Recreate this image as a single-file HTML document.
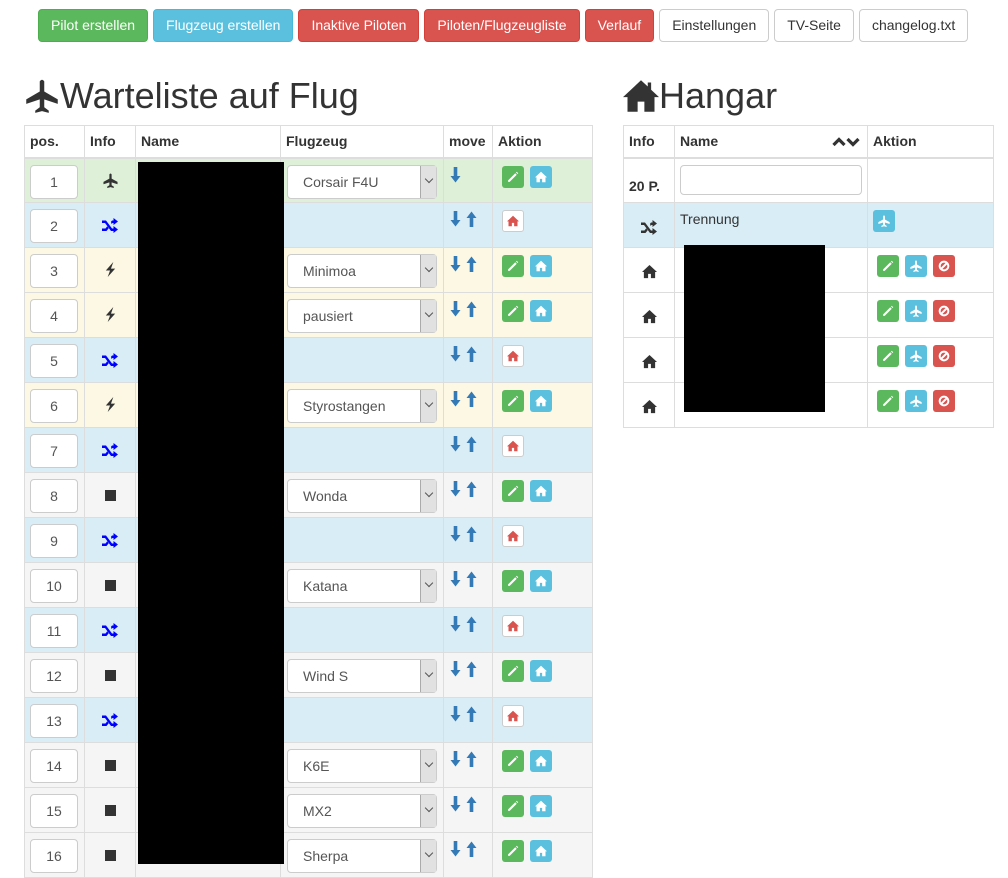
<!DOCTYPE html>
<html><head><meta charset="utf-8"><style>
body{margin:0;background:#fff;font-family:"Liberation Sans",Arial,sans-serif;font-size:14px;color:#333;width:1008px;height:876px;overflow:hidden;position:relative}
.nav{position:absolute;top:9px;left:38px;display:flex;gap:5px}
.b{height:33px;line-height:31px;padding:0 12px;border-radius:4px;color:#fff;font-size:14px;box-sizing:border-box;border:1px solid}
.g{background:#5cb85c;border-color:#4cae4c}.c{background:#5bc0de;border-color:#46b8da}.r{background:#d9534f;border-color:#d43f3a}.w{background:#fff;border-color:#ccc;color:#333}
h1{position:absolute;margin:0;font-weight:normal;font-size:36px;line-height:40px;top:76px;display:flex;align-items:center}
table{position:absolute;border-collapse:collapse;table-layout:fixed}
td,th{border:1px solid #ddd;padding:0;vertical-align:top;box-sizing:border-box}
th{text-align:left;font-weight:bold;height:32px;padding-left:5px;border-bottom:2px solid #ddd;vertical-align:middle}
#L{left:24px;top:125px;width:568px}
#L td{height:45px}
.inp{margin:6px 0 0 5px;width:48px;height:34px;border:1px solid #ccc;border-radius:4px;box-sizing:border-box;line-height:32px;text-align:center;background:#fff;font-size:14px;color:#555}
.sel{margin:6px 0 0 6px;width:150px;height:34px;border:1px solid #ccc;border-radius:4px;box-sizing:border-box;background:#fff;position:relative;color:#555;line-height:32px;padding-left:15px}
.sel:after{content:"";position:absolute;right:0;top:0;width:15px;height:32px;background:#e1e1e1;border-left:1px solid #aaa}
.sel i{position:absolute;right:4px;top:10px;width:5px;height:5px;border-right:1px solid #555;border-bottom:1px solid #555;transform:rotate(45deg);z-index:1}
.ic{text-align:center;padding-top:14px}
.mv{padding:8px 0 0 6px}
.mv svg{margin-right:5px}
.ak{padding:7px 0 0 9px}
.sb{display:inline-block;width:22px;height:22px;border-radius:3px;box-sizing:border-box;vertical-align:top;margin-right:6px;text-align:center}
.sb svg{margin-top:5px}
.sg{background:#5cb85c}.sc{background:#5bc0de}.sr{background:#d9534f}.sw{background:#fff;border:1px solid #ccc}
.gr{background:#dff0d8}.bl{background:#d9edf7}.ye{background:#fcf8e3}.gy{background:#f5f5f5}
#R{left:623px;top:125px;width:370px}
#R td{height:45px}
</style></head><body>
<div class="nav">
<div class="b g">Pilot erstellen</div><div class="b c">Flugzeug erstellen</div><div class="b r">Inaktive Piloten</div><div class="b r">Piloten/Flugzeugliste</div><div class="b r">Verlauf</div><div class="b w">Einstellungen</div><div class="b w">TV-Seite</div><div class="b w">changelog.txt</div>
</div>
<h1 style="left:24px"><svg width="36" height="36" viewBox="0 0 16 16"><path fill="#333" d="M7 1.5Q8 0 9 1.5V6L15 9.5V11.5L9 9.5V13L11 14.5V15.5L8 14.7L5 15.5V14.5L7 13V9.5L1 11.5V9.5L7 6Z"/></svg>Warteliste auf Flug</h1>
<h1 style="left:623px"><svg width="36" height="36" viewBox="0 0 16 16"><path fill="#333" d="M8 1L0 8.5H2V15H6.5V10.5H9.5V15H14V8.5H16L12.5 5.2V2H11V3.8Z"/></svg>Hangar</h1>

<svg width="0" height="0" style="position:absolute"><defs>
<symbol id="pl" viewBox="0 0 16 16"><path d="M6.8 1.5Q8 -0.5 9.2 1.5V6L15.5 9.5V12L9.2 10V13L11.5 14.5V16L8 15L4.5 16V14.5L6.8 13V10L0.5 12V9.5L6.8 6Z"/></symbol>
<symbol id="hm" viewBox="0 0 16 16"><path d="M8 1L0 8.5H2V15H6.5V10.5H9.5V15H14V8.5H16Z"/></symbol>
<symbol id="pe" viewBox="0 0 16 16"><path d="M1.5 12.5L11 3L13 5L3.5 14.5H1.5Z M12 2L13 1L15 3L14 4Z"/></symbol>
<symbol id="sh" viewBox="0 0 16 16"><path d="M0 3.5H4L10 11.5H11.5V9L16 12.5L11.5 16V14H9L3 6H0Z M0 11.5H3.5L5.2 9.3L6.7 11.2L4.5 14H0Z M9 4.8L10 3.5H11.5V1L16 4.5L11.5 8V6H10.5L9.5 7Z"/></symbol>
<symbol id="bo" viewBox="0 0 16 16"><path d="M11 0L3 9H7.5L5 16L13 7H8.5Z"/></symbol>
<symbol id="dn" viewBox="0 0 10 16"><path d="M3.2 0H6.8V9H10L5 15.5L0 9H3.2Z"/></symbol>
<symbol id="up" viewBox="0 0 10 16"><path d="M3.2 16H6.8V7H10L5 0.5L0 7H3.2Z"/></symbol>
<symbol id="ba" viewBox="0 0 16 16"><circle cx="8" cy="8" r="5.8" fill="none" stroke="#fff" stroke-width="2.6"/><path d="M4 12L12 4" stroke="#fff" stroke-width="2.6"/></symbol>
</defs></svg>

<table id="L">
<colgroup><col style="width:60px"><col style="width:51px"><col style="width:145px"><col style="width:163px"><col style="width:49px"><col style="width:100px"></colgroup>
<tr><th>pos.</th><th>Info</th><th>Name</th><th>Flugzeug</th><th>move</th><th>Aktion</th></tr>
<tr class="gr"><td><div class="inp">1</div></td><td class="ic"><svg width="15" height="15" fill="#333"><use href="#pl"/></svg></td><td></td><td><div class="sel">Corsair F4U<i></i></div></td><td class="mv"><svg width="11" height="16" fill="#337ab7"><use href="#dn"/></svg></td><td class="ak"><span class="sb sg"><svg width="12" height="12" fill="#fff"><use href="#pe"/></svg></span><span class="sb sc"><svg width="12" height="12" fill="#fff"><use href="#hm"/></svg></span></td></tr>
<tr class="bl"><td><div class="inp">2</div></td><td class="ic"><svg width="16" height="16" fill="#00f"><use href="#sh"/></svg></td><td></td><td></td><td class="mv"><svg width="11" height="16" fill="#337ab7"><use href="#dn"/></svg><svg width="11" height="16" fill="#337ab7"><use href="#up"/></svg></td><td class="ak"><span class="sb sw"><svg width="12" height="12" fill="#d9534f" style="margin-top:4px"><use href="#hm"/></svg></span></td></tr>
<tr class="ye"><td><div class="inp">3</div></td><td class="ic"><svg width="15" height="15" fill="#333"><use href="#bo"/></svg></td><td></td><td><div class="sel">Minimoa<i></i></div></td><td class="mv"><svg width="11" height="16" fill="#337ab7"><use href="#dn"/></svg><svg width="11" height="16" fill="#337ab7"><use href="#up"/></svg></td><td class="ak"><span class="sb sg"><svg width="12" height="12" fill="#fff"><use href="#pe"/></svg></span><span class="sb sc"><svg width="12" height="12" fill="#fff"><use href="#hm"/></svg></span></td></tr>
<tr class="ye"><td><div class="inp">4</div></td><td class="ic"><svg width="15" height="15" fill="#333"><use href="#bo"/></svg></td><td></td><td><div class="sel">pausiert<i></i></div></td><td class="mv"><svg width="11" height="16" fill="#337ab7"><use href="#dn"/></svg><svg width="11" height="16" fill="#337ab7"><use href="#up"/></svg></td><td class="ak"><span class="sb sg"><svg width="12" height="12" fill="#fff"><use href="#pe"/></svg></span><span class="sb sc"><svg width="12" height="12" fill="#fff"><use href="#hm"/></svg></span></td></tr>
<tr class="bl"><td><div class="inp">5</div></td><td class="ic"><svg width="16" height="16" fill="#00f"><use href="#sh"/></svg></td><td></td><td></td><td class="mv"><svg width="11" height="16" fill="#337ab7"><use href="#dn"/></svg><svg width="11" height="16" fill="#337ab7"><use href="#up"/></svg></td><td class="ak"><span class="sb sw"><svg width="12" height="12" fill="#d9534f" style="margin-top:4px"><use href="#hm"/></svg></span></td></tr>
<tr class="ye"><td><div class="inp">6</div></td><td class="ic"><svg width="15" height="15" fill="#333"><use href="#bo"/></svg></td><td></td><td><div class="sel">Styrostangen<i></i></div></td><td class="mv"><svg width="11" height="16" fill="#337ab7"><use href="#dn"/></svg><svg width="11" height="16" fill="#337ab7"><use href="#up"/></svg></td><td class="ak"><span class="sb sg"><svg width="12" height="12" fill="#fff"><use href="#pe"/></svg></span><span class="sb sc"><svg width="12" height="12" fill="#fff"><use href="#hm"/></svg></span></td></tr>
<tr class="bl"><td><div class="inp">7</div></td><td class="ic"><svg width="16" height="16" fill="#00f"><use href="#sh"/></svg></td><td></td><td></td><td class="mv"><svg width="11" height="16" fill="#337ab7"><use href="#dn"/></svg><svg width="11" height="16" fill="#337ab7"><use href="#up"/></svg></td><td class="ak"><span class="sb sw"><svg width="12" height="12" fill="#d9534f" style="margin-top:4px"><use href="#hm"/></svg></span></td></tr>
<tr class="gy"><td><div class="inp">8</div></td><td class="ic"><svg width="14" height="14"><rect x="2" y="3" width="11" height="11" fill="#333"/></svg></td><td></td><td><div class="sel">Wonda<i></i></div></td><td class="mv"><svg width="11" height="16" fill="#337ab7"><use href="#dn"/></svg><svg width="11" height="16" fill="#337ab7"><use href="#up"/></svg></td><td class="ak"><span class="sb sg"><svg width="12" height="12" fill="#fff"><use href="#pe"/></svg></span><span class="sb sc"><svg width="12" height="12" fill="#fff"><use href="#hm"/></svg></span></td></tr>
<tr class="bl"><td><div class="inp">9</div></td><td class="ic"><svg width="16" height="16" fill="#00f"><use href="#sh"/></svg></td><td></td><td></td><td class="mv"><svg width="11" height="16" fill="#337ab7"><use href="#dn"/></svg><svg width="11" height="16" fill="#337ab7"><use href="#up"/></svg></td><td class="ak"><span class="sb sw"><svg width="12" height="12" fill="#d9534f" style="margin-top:4px"><use href="#hm"/></svg></span></td></tr>
<tr class="gy"><td><div class="inp">10</div></td><td class="ic"><svg width="14" height="14"><rect x="2" y="3" width="11" height="11" fill="#333"/></svg></td><td></td><td><div class="sel">Katana<i></i></div></td><td class="mv"><svg width="11" height="16" fill="#337ab7"><use href="#dn"/></svg><svg width="11" height="16" fill="#337ab7"><use href="#up"/></svg></td><td class="ak"><span class="sb sg"><svg width="12" height="12" fill="#fff"><use href="#pe"/></svg></span><span class="sb sc"><svg width="12" height="12" fill="#fff"><use href="#hm"/></svg></span></td></tr>
<tr class="bl"><td><div class="inp">11</div></td><td class="ic"><svg width="16" height="16" fill="#00f"><use href="#sh"/></svg></td><td></td><td></td><td class="mv"><svg width="11" height="16" fill="#337ab7"><use href="#dn"/></svg><svg width="11" height="16" fill="#337ab7"><use href="#up"/></svg></td><td class="ak"><span class="sb sw"><svg width="12" height="12" fill="#d9534f" style="margin-top:4px"><use href="#hm"/></svg></span></td></tr>
<tr class="gy"><td><div class="inp">12</div></td><td class="ic"><svg width="14" height="14"><rect x="2" y="3" width="11" height="11" fill="#333"/></svg></td><td></td><td><div class="sel">Wind S<i></i></div></td><td class="mv"><svg width="11" height="16" fill="#337ab7"><use href="#dn"/></svg><svg width="11" height="16" fill="#337ab7"><use href="#up"/></svg></td><td class="ak"><span class="sb sg"><svg width="12" height="12" fill="#fff"><use href="#pe"/></svg></span><span class="sb sc"><svg width="12" height="12" fill="#fff"><use href="#hm"/></svg></span></td></tr>
<tr class="bl"><td><div class="inp">13</div></td><td class="ic"><svg width="16" height="16" fill="#00f"><use href="#sh"/></svg></td><td></td><td></td><td class="mv"><svg width="11" height="16" fill="#337ab7"><use href="#dn"/></svg><svg width="11" height="16" fill="#337ab7"><use href="#up"/></svg></td><td class="ak"><span class="sb sw"><svg width="12" height="12" fill="#d9534f" style="margin-top:4px"><use href="#hm"/></svg></span></td></tr>
<tr class="gy"><td><div class="inp">14</div></td><td class="ic"><svg width="14" height="14"><rect x="2" y="3" width="11" height="11" fill="#333"/></svg></td><td></td><td><div class="sel">K6E<i></i></div></td><td class="mv"><svg width="11" height="16" fill="#337ab7"><use href="#dn"/></svg><svg width="11" height="16" fill="#337ab7"><use href="#up"/></svg></td><td class="ak"><span class="sb sg"><svg width="12" height="12" fill="#fff"><use href="#pe"/></svg></span><span class="sb sc"><svg width="12" height="12" fill="#fff"><use href="#hm"/></svg></span></td></tr>
<tr class="gy"><td><div class="inp">15</div></td><td class="ic"><svg width="14" height="14"><rect x="2" y="3" width="11" height="11" fill="#333"/></svg></td><td></td><td><div class="sel">MX2<i></i></div></td><td class="mv"><svg width="11" height="16" fill="#337ab7"><use href="#dn"/></svg><svg width="11" height="16" fill="#337ab7"><use href="#up"/></svg></td><td class="ak"><span class="sb sg"><svg width="12" height="12" fill="#fff"><use href="#pe"/></svg></span><span class="sb sc"><svg width="12" height="12" fill="#fff"><use href="#hm"/></svg></span></td></tr>
<tr class="gy"><td><div class="inp">16</div></td><td class="ic"><svg width="14" height="14"><rect x="2" y="3" width="11" height="11" fill="#333"/></svg></td><td></td><td><div class="sel">Sherpa<i></i></div></td><td class="mv"><svg width="11" height="16" fill="#337ab7"><use href="#dn"/></svg><svg width="11" height="16" fill="#337ab7"><use href="#up"/></svg></td><td class="ak"><span class="sb sg"><svg width="12" height="12" fill="#fff"><use href="#pe"/></svg></span><span class="sb sc"><svg width="12" height="12" fill="#fff"><use href="#hm"/></svg></span></td></tr>
</table>
<div style="position:absolute;left:138px;top:162px;width:146px;height:702px;background:#000"></div>

<table id="R">
<colgroup><col style="width:51px"><col style="width:193px"><col style="width:126px"></colgroup>
<tr><th>Info</th><th style="position:relative">Name<svg style="position:absolute;right:7px;top:10px" width="28" height="11" viewBox="0 0 28 11"><path d="M1.5 9L7 3.5L12.5 9" stroke="#333" stroke-width="3.2" fill="none"/><path d="M15.5 3L21 8.5L26.5 3" stroke="#333" stroke-width="3.2" fill="none"/></svg></th><th>Aktion</th></tr>
<tr><td style="font-weight:bold;padding:19px 0 0 5px;height:42px">20 P.</td><td><div style="margin:6px 0 0 5px;width:182px;height:30px;border:1px solid #ccc;border-radius:4px;box-sizing:border-box"></div></td><td></td></tr>
<tr class="bl"><td class="ic" style="padding-top:16px"><svg width="16" height="16" fill="#333"><use href="#sh"/></svg></td><td style="padding:8px 0 0 5px">Trennung</td><td class="ak" style="padding-left:5px"><span class="sb sc"><svg width="12" height="12" fill="#fff"><use href="#pl"/></svg></span></td></tr>
<tr><td class="ic" style="padding-top:16px"><svg width="15" height="15" fill="#333"><use href="#hm"/></svg></td><td></td><td class="ak" style="padding-left:9px"><span class="sb sg"><svg width="12" height="12" fill="#fff"><use href="#pe"/></svg></span><span class="sb sc"><svg width="12" height="12" fill="#fff"><use href="#pl"/></svg></span><span class="sb sr"><svg width="12" height="12"><use href="#ba"/></svg></span></td></tr>
<tr><td class="ic" style="padding-top:16px"><svg width="15" height="15" fill="#333"><use href="#hm"/></svg></td><td></td><td class="ak" style="padding-left:9px"><span class="sb sg"><svg width="12" height="12" fill="#fff"><use href="#pe"/></svg></span><span class="sb sc"><svg width="12" height="12" fill="#fff"><use href="#pl"/></svg></span><span class="sb sr"><svg width="12" height="12"><use href="#ba"/></svg></span></td></tr>
<tr><td class="ic" style="padding-top:16px"><svg width="15" height="15" fill="#333"><use href="#hm"/></svg></td><td></td><td class="ak" style="padding-left:9px"><span class="sb sg"><svg width="12" height="12" fill="#fff"><use href="#pe"/></svg></span><span class="sb sc"><svg width="12" height="12" fill="#fff"><use href="#pl"/></svg></span><span class="sb sr"><svg width="12" height="12"><use href="#ba"/></svg></span></td></tr>
<tr><td class="ic" style="padding-top:16px"><svg width="15" height="15" fill="#333"><use href="#hm"/></svg></td><td></td><td class="ak" style="padding-left:9px"><span class="sb sg"><svg width="12" height="12" fill="#fff"><use href="#pe"/></svg></span><span class="sb sc"><svg width="12" height="12" fill="#fff"><use href="#pl"/></svg></span><span class="sb sr"><svg width="12" height="12"><use href="#ba"/></svg></span></td></tr>
</table>
<div style="position:absolute;left:684px;top:245px;width:141px;height:167px;background:#000"></div>
</body></html>
